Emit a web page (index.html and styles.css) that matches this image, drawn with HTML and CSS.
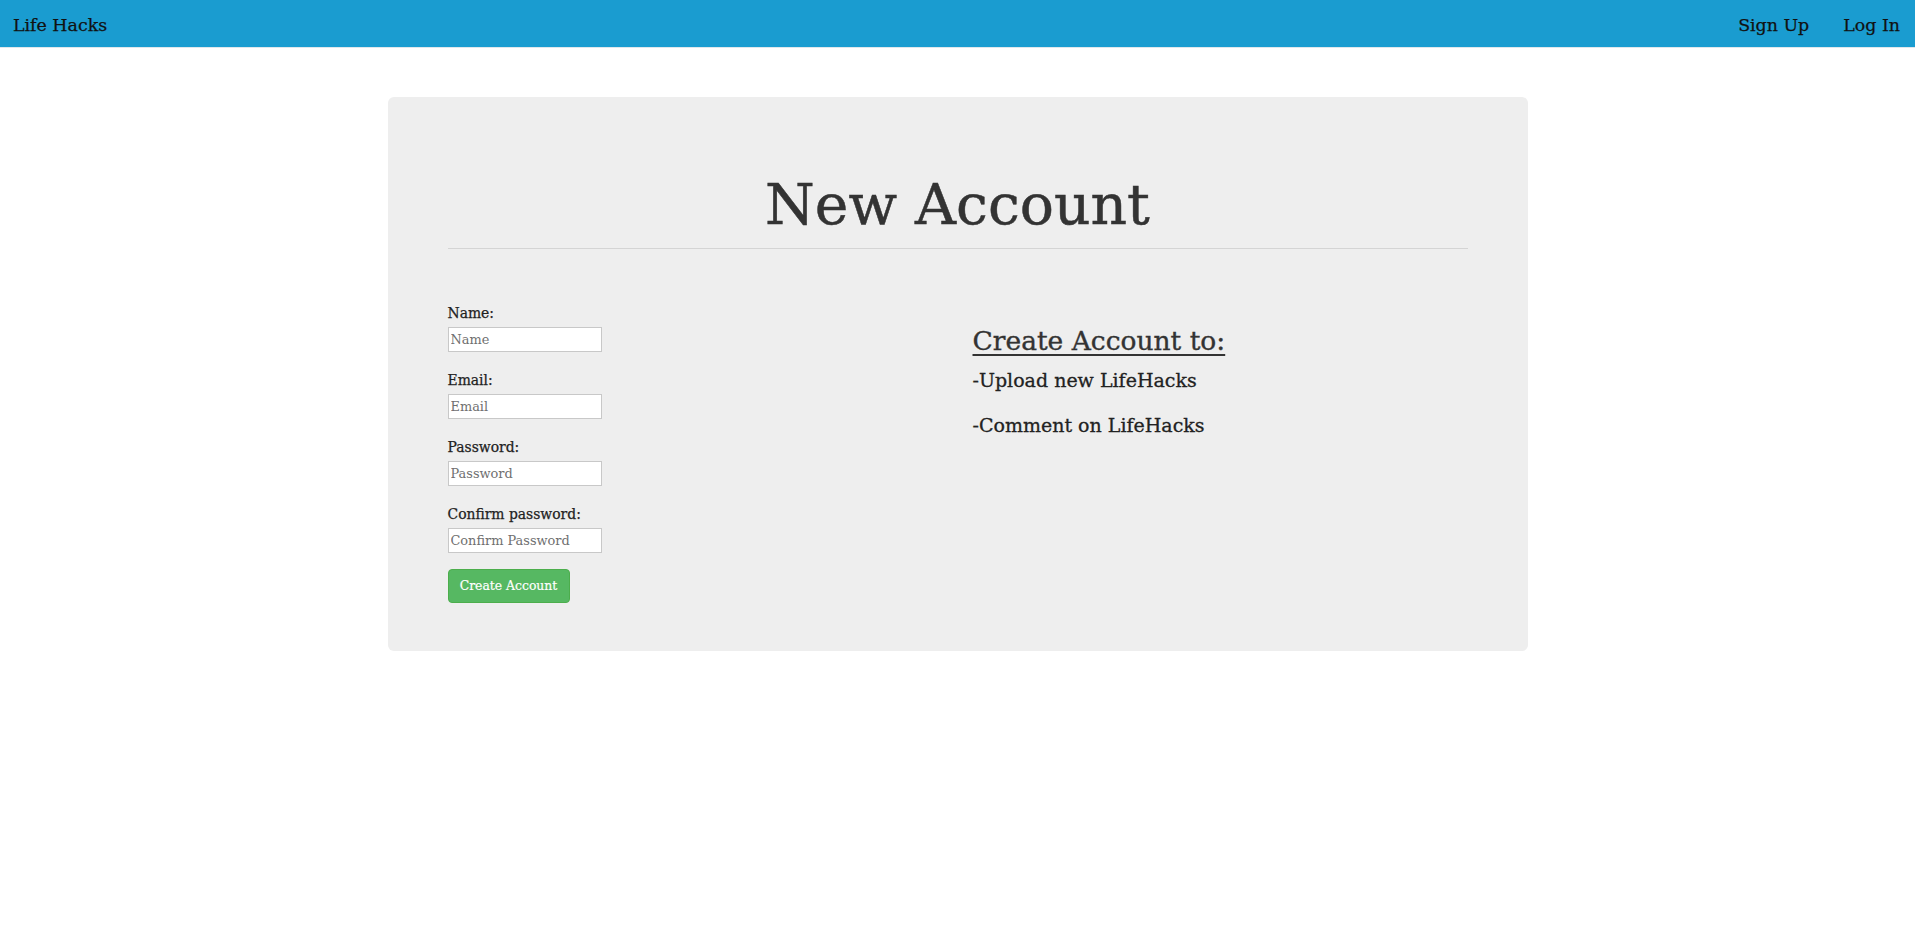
FILE: index.html
```html
<!DOCTYPE html>
<html lang="en">
<head>
<meta charset="utf-8">
<title>Life Hacks - New Account</title>
<link rel="stylesheet" href="styles.css">
</head>
<body>
<nav class="navbar">
  <a class="brand" href="#">Life Hacks</a>
  <ul class="nav-links">
    <li><a href="#">Sign Up</a></li>
    <li><a href="#">Log In</a></li>
  </ul>
</nav>
<main class="container">
  <section class="jumbotron">
    <h1 class="title">New Account</h1>
    <hr class="divider">
    <div class="row">
      <form class="signup-form">
        <div class="field">
          <label for="name">Name:</label>
          <input id="name" type="text" placeholder="Name">
        </div>
        <div class="field">
          <label for="email">Email:</label>
          <input id="email" type="text" placeholder="Email">
        </div>
        <div class="field">
          <label for="password">Password:</label>
          <input id="password" type="password" placeholder="Password">
        </div>
        <div class="field">
          <label for="confirm">Confirm password:</label>
          <input id="confirm" type="password" placeholder="Confirm Password">
        </div>
        <button type="button" class="btn-success">Create Account</button>
      </form>
      <div class="benefits">
        <h2 class="benefits-title">Create Account to:</h2>
        <p>-Upload new LifeHacks</p>
        <p>-Comment on LifeHacks</p>
      </div>
    </div>
  </section>
</main>
</body>
</html>
```
FILE: styles.css
```css
* { box-sizing: border-box; }

html, body {
  margin: 0;
  padding: 0;
  background: #ffffff;
  font-family: "DejaVu Serif", "Liberation Serif", serif;
  color: #333333;
}

.navbar {
  display: flex;
  justify-content: space-between;
  align-items: flex-start;
  height: 48px;
  background: #1a9cd0;
  border-bottom: 1px solid #dfe7ec;
}

.brand,
.nav-links a {
  display: block;
  font-size: 17.4px;
  line-height: 20px;
  color: #111111;
  text-decoration: none;
  padding: 15px 0 11px;
  -webkit-text-stroke: 0.25px #111111;
}

.brand { margin-left: 13px; }

.nav-links {
  display: flex;
  gap: 34px;
  list-style: none;
  margin: 0 15px 0 0;
  padding: 0;
}

.container {
  width: 1140px;
  margin: 49px auto 0;
}

.jumbotron {
  background: #eeeeee;
  border-radius: 6px;
  padding: 48px 60px;
}

.title {
  margin: 28px 0 0;
  font-size: 56.8px;
  line-height: 63px;
  font-weight: normal;
  text-align: center;
  color: #333333;
  -webkit-text-stroke: 0.5px #333333;
}

.divider {
  margin: 12px 0 0;
  border: 0;
  border-top: 1px solid #d4d4d4;
  height: 0;
}

.row {
  display: grid;
  grid-template-columns: 1fr 1fr;
}

.signup-form {
  padding-top: 54px;
  display: flex;
  flex-direction: column;
  align-items: flex-start;
}

.field {
  display: flex;
  flex-direction: column;
  align-items: flex-start;
  gap: 4px;
  margin-bottom: 18px;
}

.field label {
  font-size: 13.9px;
  line-height: 20px;
  color: #222222;
  -webkit-text-stroke: 0.25px #222222;
}

.field input {
  width: 154px;
  height: 25px;
  margin: 0;
  padding: 1px 2px;
  border: 1px solid #c8c8c8;
  background: #ffffff;
  font-family: "DejaVu Serif", "Liberation Serif", serif;
  font-size: 12.9px;
  color: #333333;
  outline: none;
}

.field input::placeholder { color: #6f6f6f; }

.field:last-of-type { margin-bottom: 16px; }

.btn-success {
  width: 122px;
  height: 34px;
  padding: 0;
  border: 1px solid #4cae4c;
  border-radius: 4px;
  background: #56b862;
  color: #ffffff;
  font-family: "DejaVu Serif", "Liberation Serif", serif;
  font-size: 12.4px;
  line-height: 20px;
  cursor: pointer;
  -webkit-text-stroke: 0.2px #ffffff;
}

.benefits {
  padding-left: 15px;
  padding-top: 77px;
}

.benefits-title {
  margin: 0 0 10px;
  font-size: 26.5px;
  line-height: 29px;
  font-weight: normal;
  text-decoration: underline;
  text-decoration-thickness: 2px;
  text-underline-offset: 4px;
  color: #333333;
  -webkit-text-stroke: 0.35px #333333;
}

.benefits p {
  margin: 0 0 15px;
  font-size: 19px;
  line-height: 30px;
  color: #222222;
  -webkit-text-stroke: 0.3px #222222;
}
```
